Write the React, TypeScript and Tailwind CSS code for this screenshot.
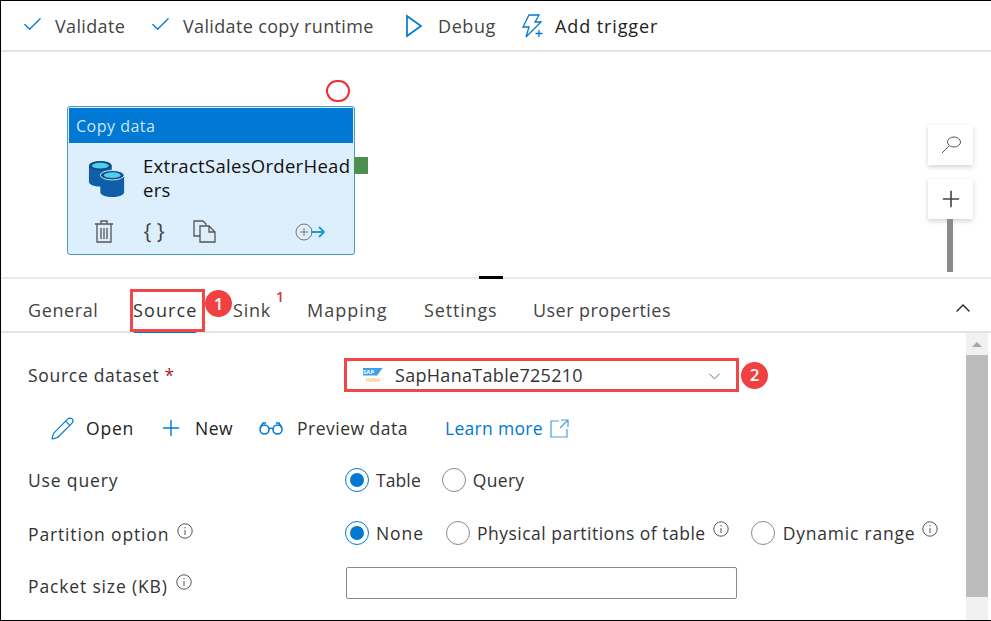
import { Check, ChevronDown, ChevronUp, Pencil, Plus } from "lucide-react"

const font = "font-['Open_Sans','Noto_Sans',sans-serif]"

function Info() {
    return (
        <svg width="16" height="16" viewBox="0 0 16 16" fill="none" stroke="#555" strokeWidth="1" className="shrink-0 -mt-2">
            <circle cx="8" cy="8" r="7.2" />
            <path d="M8 7v5M8 4v1.4" />
        </svg>
    )
}

function Radio({ checked, label, info, className }: { checked?: boolean; label: string; info?: boolean; className?: string }) {
    return (
        <div className="flex items-center gap-[7px]">
            {checked ? (
                <span className="w-6 h-6 rounded-full border border-[#0078d4] flex items-center justify-center">
                    <span className="w-[14px] h-[14px] rounded-full bg-[#0078d4]"></span>
                </span>
            ) : (
                <span className="w-6 h-6 rounded-full border border-[#8a8a8a]"></span>
            )}
            <span className={className}>{label}</span>
            {info && <Info />}
        </div>
    )
}

function Badge({ n }: { n: number }) {
    return (
        <span className="absolute w-[27px] h-[27px] rounded-full bg-[#f04040] text-white text-[17px] font-semibold flex items-center justify-center">
            {n}
        </span>
    )
}

function ToolItem({ icon, label, className }: { icon: React.ReactNode; label: string; className: string }) {
    return (
        <div className={`flex items-center ${className}`}>
            {icon}
            <span>{label}</span>
        </div>
    )
}

function Cylinders() {
    return (
        <svg width="38" height="38" viewBox="0 0 40 40" className="mt-[6px] shrink-0">
            <path d="M1 6v17c0 3 5 5 12 5s12-2 12-5V6z" fill="#0f5fa8" />
            <ellipse cx="13" cy="6" rx="12" ry="5" fill="#0a4c8c" />
            <ellipse cx="13" cy="6" rx="9" ry="3" fill="#50cfe8" />
            <path d="M13 16v18c0 3 6 5 12.500 5S38 37 38 34V16z" fill="#0f5fa8" />
            <ellipse cx="25.500" cy="16" rx="12.500" ry="5" fill="#0a4c8c" stroke="#dcedfd" strokeWidth="1" />
            <ellipse cx="25.500" cy="16" rx="9" ry="3" fill="#50cfe8" />
        </svg>
    )
}

export default function App() {
    return (
        <div className={`${font} relative w-[991px] h-[621px] bg-white border-l border-t border-b border-black overflow-hidden text-[#333] flex flex-col`}>
            {/* toolbar */}
            <div className="h-[51px] shrink-0 border-b-2 border-[#e4e4e4] flex items-center pl-[20px] pt-[2px] text-[18px] tracking-[0.35px] text-[#444]">
                <ToolItem className="gap-[11px] w-[128px]" icon={<Check size={23} strokeWidth={1.3} color="#0078d4" className="-mt-[5px]" />} label="Validate" />
                <ToolItem className="gap-[11px] w-[255px]" icon={<Check size={23} strokeWidth={1.3} color="#0078d4" className="-mt-[5px]" />} label="Validate copy runtime" />
                <ToolItem className="gap-[14px] w-[117px] tracking-[0.6px]" icon={
                    <svg width="20" height="24" viewBox="0 0 20 24" fill="none" stroke="#0078d4" strokeWidth="1.700" className="-mt-[2px]"><path d="M3 2l14 10L3 22z" /></svg>
                } label="Debug" />
                <ToolItem className="gap-[11px] text-[#222] tracking-[0.9px]" icon={
                    <svg width="23" height="24" viewBox="0 0 23 24" fill="none" stroke="#0078d4" strokeWidth="1.300" className="-mt-[2px]">
                        <path d="M8 1h10l-4 7h6L5 23l3-10H2z" />
                        <path d="M18 16v7M14.500 19.500h7" />
                    </svg>
                } label="Add trigger" />
            </div>

            {/* canvas */}
            <div className="relative h-[227px] shrink-0 border-b-2 border-[#e8e8e8]">
                <span className="absolute left-[325px] top-[28px] w-[24px] h-[22px] rounded-full border-2 border-[#f03030] bg-white"></span>
                <div className="absolute left-[66px] top-[54px] w-[288px] h-[149px] rounded-[3px] border border-[#4d9ac0] bg-[#ddeefd] p-[1px]">
                    <div className="h-[35px] bg-[#0078d4] text-[#cfe6fa] text-[16px] tracking-[0.5px] flex items-center pl-[7px]">Copy data</div>
                    <div className="flex pl-[19px] pt-[11px]">
                        <Cylinders />
                        <div className="ml-[17px] w-[210px] text-[18.500px] tracking-[0.3px] leading-[24px] text-[#111] break-all">ExtractSalesOrderHeaders</div>
                    </div>
                    <div className="flex items-center pl-[25px] pt-[18px] text-[#444]">
                        <svg width="20" height="23" viewBox="0 0 20 23" fill="none" stroke="#555" strokeWidth="1.300">
                            <path d="M1 4h18M7 4V1h6v3M3 4v18h14V4M7 8v11M10 8v11M13 8v11" />
                        </svg>
                        <span className="ml-[28px] text-[21px] leading-[23px] w-[24px] text-center">{"{ }"}</span>
                        <svg width="23" height="23" viewBox="0 0 23 23" fill="none" stroke="#555" strokeWidth="1.300" className="ml-[27px]">
                            <path d="M7 16H1V1h9l3 3v2" />
                            <path d="M7 6h9l6 6v10H7zM16 6v6h6" />
                        </svg>
                        <span className="ml-[78px] flex items-center">
                            <svg width="32" height="20" viewBox="0 0 32 20" fill="none">
                                <circle cx="10" cy="10" r="8" stroke="#777" strokeWidth="1" />
                                <path d="M10 6v8M6 10h8" stroke="#777" strokeWidth="1" />
                                <path d="M17 10h13M25 5l5 5-5 5" stroke="#1f9bcb" strokeWidth="1.800" />
                            </svg>
                        </span>
                    </div>
                </div>
                <span className="absolute left-[353px] top-[105px] w-[14px] h-[17px] bg-[#4c8f50]"></span>
                <span className="absolute left-[478px] top-[224px] w-[24px] h-[3px] bg-black"></span>

                <div className="absolute left-[927px] top-[73px] w-[45px] h-[40px] bg-white shadow-[0_2px_5px_rgba(0,0,0,0.18)] flex items-center justify-center">
                    <svg width="22" height="22" viewBox="0 0 22 22" fill="none" stroke="#555" strokeWidth="1"><ellipse cx="14" cy="8" rx="6.500" ry="5" /><path d="M9 12l-7 7" /></svg>
                </div>
                <div className="absolute left-[927px] top-[127px] w-[45px] h-[40px] bg-white shadow-[0_2px_5px_rgba(0,0,0,0.18)] flex items-center justify-center">
                    <Plus size={26} strokeWidth={1.500} color="#444" />
                </div>
                <span className="absolute left-[946px] top-[167px] w-[6px] h-[53px] bg-[#8a8a8a]"></span>
            </div>

            {/* tabs */}
            <div className="relative h-[54px] shrink-0 border-b-2 border-[#e4e4e4] flex items-center pl-[27px] pt-[10px] text-[18px] tracking-[0.6px] text-[#444]">
                <span className="w-[105px]">General</span>
                <span className="relative w-[100px]">
                    <span className="relative text-[#333] tracking-[1.1px]">Source</span>
                    <span className="absolute left-[1px] top-[34px] w-[62px] h-[2px] bg-[#0078d4]"></span>
                    <span className="absolute left-[-3px] top-[-8px] w-[75px] h-[43px] border-[3px] border-[#f04848]"></span>
                </span>
                <span className="relative w-[74px] tracking-[0.8px]">
                    Sink
                    <span className="absolute left-[43px] top-[-11px] text-[14px] font-semibold text-[#d13438]">1</span>
                </span>
                <span className="w-[117px] tracking-[1px]">Mapping</span>
                <span className="w-[109px] tracking-[0.85px]">Settings</span>
                <span className="tracking-[0.45px]">User properties</span>
                <ChevronUp size={24} strokeWidth={1.400} color="#222" className="absolute left-[950px] top-[17px]" />
            </div>
            <span className="absolute left-[204px] top-[289px]"><Badge n={1} /></span>

            {/* form */}
            <div className="relative flex-1 flex text-[17.500px] tracking-[0.5px]">
                <div className="flex-1 pl-[27px] pt-[25px]">
                    <div className="flex items-center h-[34px]">
                        <span className="w-[316px] tracking-[0.7px]">Source dataset <span className="text-[#a4262c]">*</span></span>
                        <div className="relative flex items-center w-[395px] h-[34px] border-[3px] border-[#f04848] pl-[15px]">
                            <span className="flex flex-col items-center w-[22px] leading-none tracking-normal">
                                <span className="w-[20px] h-[8px] bg-[#3ba0e8] text-[6px] text-white font-bold leading-[8px] [clip-path:polygon(0_0,100%_0,70%_100%,0_100%)]">SAP</span>
                                <span className="text-[5px] text-[#f0a040] mt-[2px]">HANA</span>
                            </span>
                            <span className="ml-[11px] text-[18px] tracking-[0.3px]">SapHanaTable725210</span>
                            <ChevronDown size={19} strokeWidth={1.200} color="#666" className="absolute right-[12px] top-[6px]" />
                        </div>
                        <span className="relative w-[27px] h-[27px] ml-[2px] tracking-normal"><Badge n={2} /></span>
                    </div>

                    <div className="flex items-center h-[32px] mt-[20px] pl-[22px]">
                        <span className="flex items-center gap-[11px] w-[108px] text-[#222] tracking-[0.8px]"><Pencil size={25} strokeWidth={1.100} color="#0078d4" />Open</span>
                        <span className="flex items-center gap-[11px] w-[100px] text-[#222]"><Plus size={26} strokeWidth={1.300} color="#0078d4" />New</span>
                        <span className="flex items-center gap-[13px] w-[187px]">
                            <svg width="26" height="14" viewBox="0 0 26 14" fill="none" stroke="#0078d4" strokeWidth="1.500"><circle cx="6.500" cy="8.500" r="4.500" /><circle cx="19.500" cy="8.500" r="4.500" /><path d="M11 8c1-1 3-1 4 0M2 7l3-5h3M24 7l-3-5h-3" /></svg>
                            Preview data
                        </span>
                        <span className="flex items-center gap-[7px] tracking-[0.3px] text-[#0078d4]">
                            Learn more
                            <svg width="19" height="19" viewBox="0 0 19 19" fill="none" stroke="#4a9ddf" strokeWidth="1.200"><path d="M9 2H1v16h16v-8M11 1h7v7M18 1l-8 8" /></svg>
                        </span>
                    </div>

                    <div className="flex items-center h-[32px] mt-[20px]">
                        <span className="w-[317px] tracking-[0.85px]">Use query</span>
                        <div className="flex items-center gap-[21px]">
                            <Radio checked label="Table" className="tracking-[0.1px]" />
                            <Radio label="Query" className="tracking-[0.3px]" />
                        </div>
                    </div>

                    <div className="flex items-center h-[32px] mt-[21px]">
                        <span className="w-[317px] tracking-[0.85px] flex items-center gap-[8px] pt-[3px]">Partition option <Info /></span>
                        <div className="flex items-center gap-[22px]">
                            <Radio checked label="None" className="tracking-[0.9px]" />
                            <Radio label="Physical partitions of table" info />
                            <Radio label="Dynamic range" info className="tracking-[0.8px] ml-[1px]" />
                        </div>
                    </div>

                    <div className="flex items-center h-[32px] mt-[18px]">
                        <span className="w-[318px] tracking-[0.85px] flex items-center gap-[8px] pt-[6px]">Packet size (KB) <Info /></span>
                        <div className="w-[391px] h-[32px] rounded-[2px] border border-[#8a8a8a]"></div>
                    </div>
                </div>

                {/* scrollbar */}
                <div className="w-[22px] mr-[3px] bg-[#f1f1f1] flex flex-col items-center shrink-0">
                    <div className="h-[22px] flex items-center justify-center">
                        <span className="w-0 h-0 border-l-[5px] border-r-[5px] border-b-[5px] border-l-transparent border-r-transparent border-b-[#a6a6a6]"></span>
                    </div>
                    <div className="w-full h-[242px] bg-[#bcbcbc]"></div>
                </div>
            </div>
        </div>
    )
}
